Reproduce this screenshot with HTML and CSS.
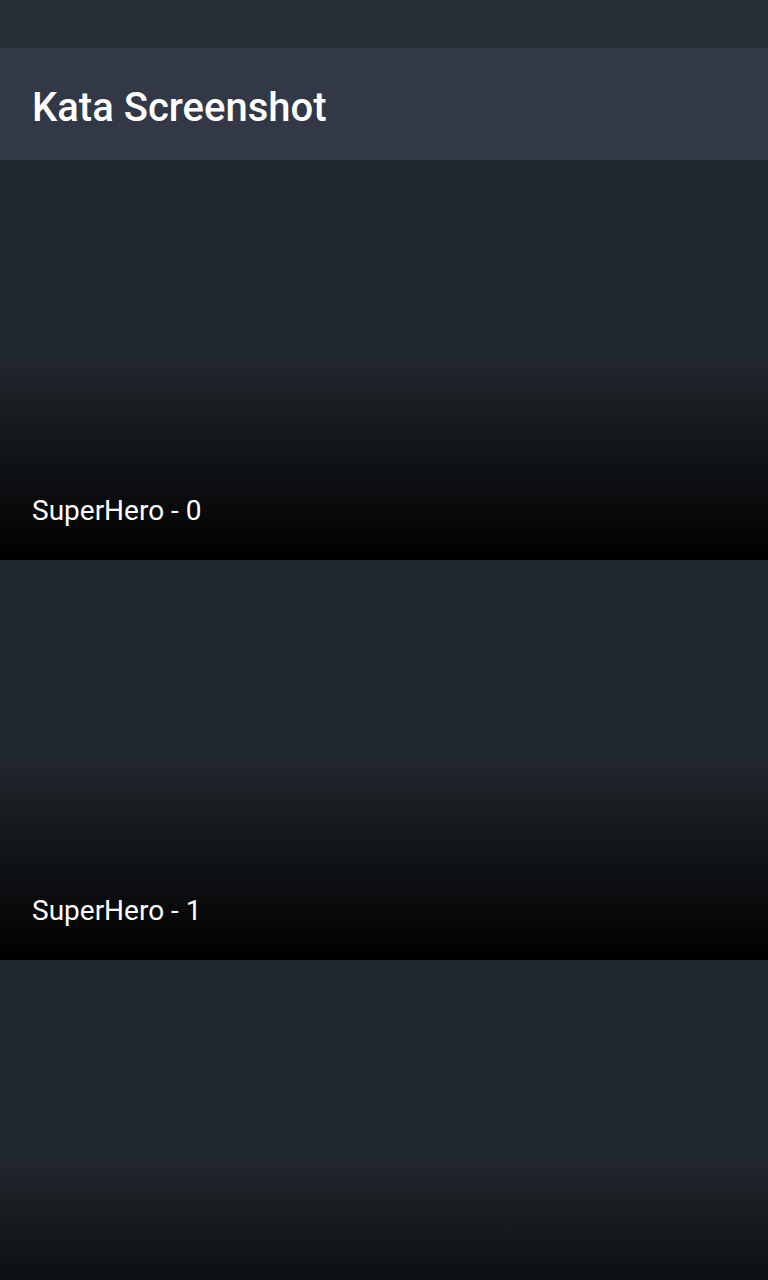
FILE: index.html
```html
<!DOCTYPE html>
<html>
<head>
<meta charset="utf-8">
<link rel="stylesheet" href="styles.css">
</head>
<body>
<div class="status"></div>
<header class="toolbar"><h1 class="title">Kata Screenshot</h1></header>
<main class="list">
  <div class="item"><span class="name">SuperHero - 0</span></div>
  <div class="item"><span class="name">SuperHero - 1</span></div>
  <div class="item"></div>
</main>
</body>
</html>
```
FILE: styles.css
```css
html, body { margin: 0; padding: 0; }
body {
  width: 768px;
  height: 1280px;
  overflow: hidden;
  background: #22282f;
  font-family: Roboto, "Liberation Sans", sans-serif;
  color: #fff;
}
.status { height: 48px; background: #272d37; }
.toolbar {
  height: 112px;
  box-sizing: border-box;
  background: #323845;
  padding: 36px 32px 0;
}
.title {
  margin: 0;
  font-size: 40px;
  font-weight: 500;
  line-height: 48px;
}
.list { display: flex; flex-direction: column; }
.item {
  height: 400px;
  flex: none;
  box-sizing: border-box;
  background: linear-gradient(to bottom, #22282f 0, #22282f 195px, #000 400px);
  display: flex;
  align-items: flex-end;
  padding: 0 32px 33px;
}
.name {
  font-size: 28px;
  line-height: 32px;
  font-weight: 400;
}
```
